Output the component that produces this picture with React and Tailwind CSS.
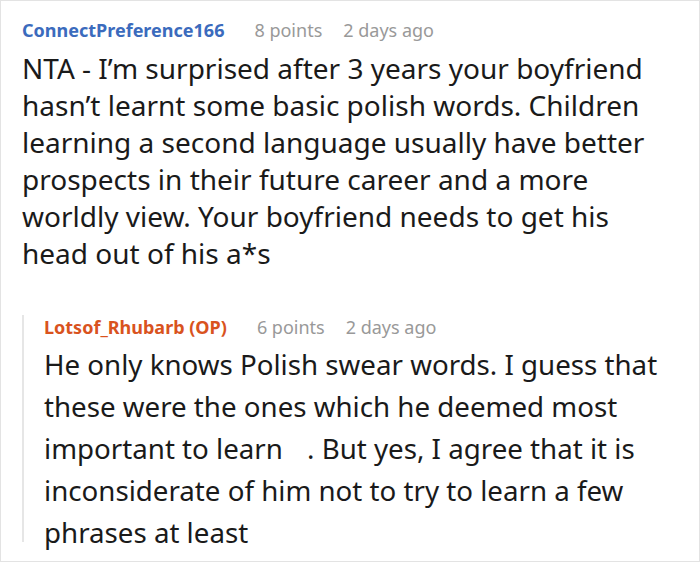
import React from 'react';

const font = { fontFamily: '"Noto Sans", "Open Sans", sans-serif' };

const Meta = ({ name, nameClass, points, age }) => (
    <div className="flex items-center text-[18px] leading-6 whitespace-nowrap">
        <span className={`font-bold ${nameClass}`}>{name}</span>
        <span className="ml-[30px] text-[#999999]">{points}</span>
        <span className="ml-[21px] text-[#999999]">{age}</span>
    </div>
);

const App = () => {
    return (
        <div
            className="w-[700px] h-[562px] bg-white border border-[#e3e3e3] overflow-hidden pl-[21px] pr-[10px] pt-[17px]"
            style={font}
        >
            {/* top comment */}
            <Meta
                name="ConnectPreference166"
                nameClass="text-[#3b6bbd]"
                points="8 points"
                age="2 days ago"
            />
            <p className="mt-[8px] text-[28px] leading-[37px] text-[#1a1a1a] whitespace-nowrap">
                NTA - I’m surprised after 3 years your boyfriend<br />
                hasn’t learnt some basic polish words. Children<br />
                learning a second language usually have better<br />
                prospects in their future career and a more<br />
                worldly view. Your boyfriend needs to get his<br />
                head out of his a*s
            </p>

            {/* reply */}
            <div className="mt-[43px] border-l-2 border-[#e6e6e6] h-[227px] pl-[20px]">
                <Meta
                    name="Lotsof_Rhubarb (OP)"
                    nameClass="text-[#d9531e]"
                    points="6 points"
                    age="2 days ago"
                />
                <p className="mt-[4px] text-[27.7px] leading-[42px] text-[#1a1a1a] whitespace-nowrap">
                    He only knows Polish swear words. I guess that<br />
                    these were the ones which he deemed most<br />
                    important to learn<span className="inline-block w-[17px]"></span> . But yes, I agree that it is<br />
                    inconsiderate of him not to try to learn a few<br />
                    phrases at least
                </p>
            </div>
        </div>
    );
};

export default App;
